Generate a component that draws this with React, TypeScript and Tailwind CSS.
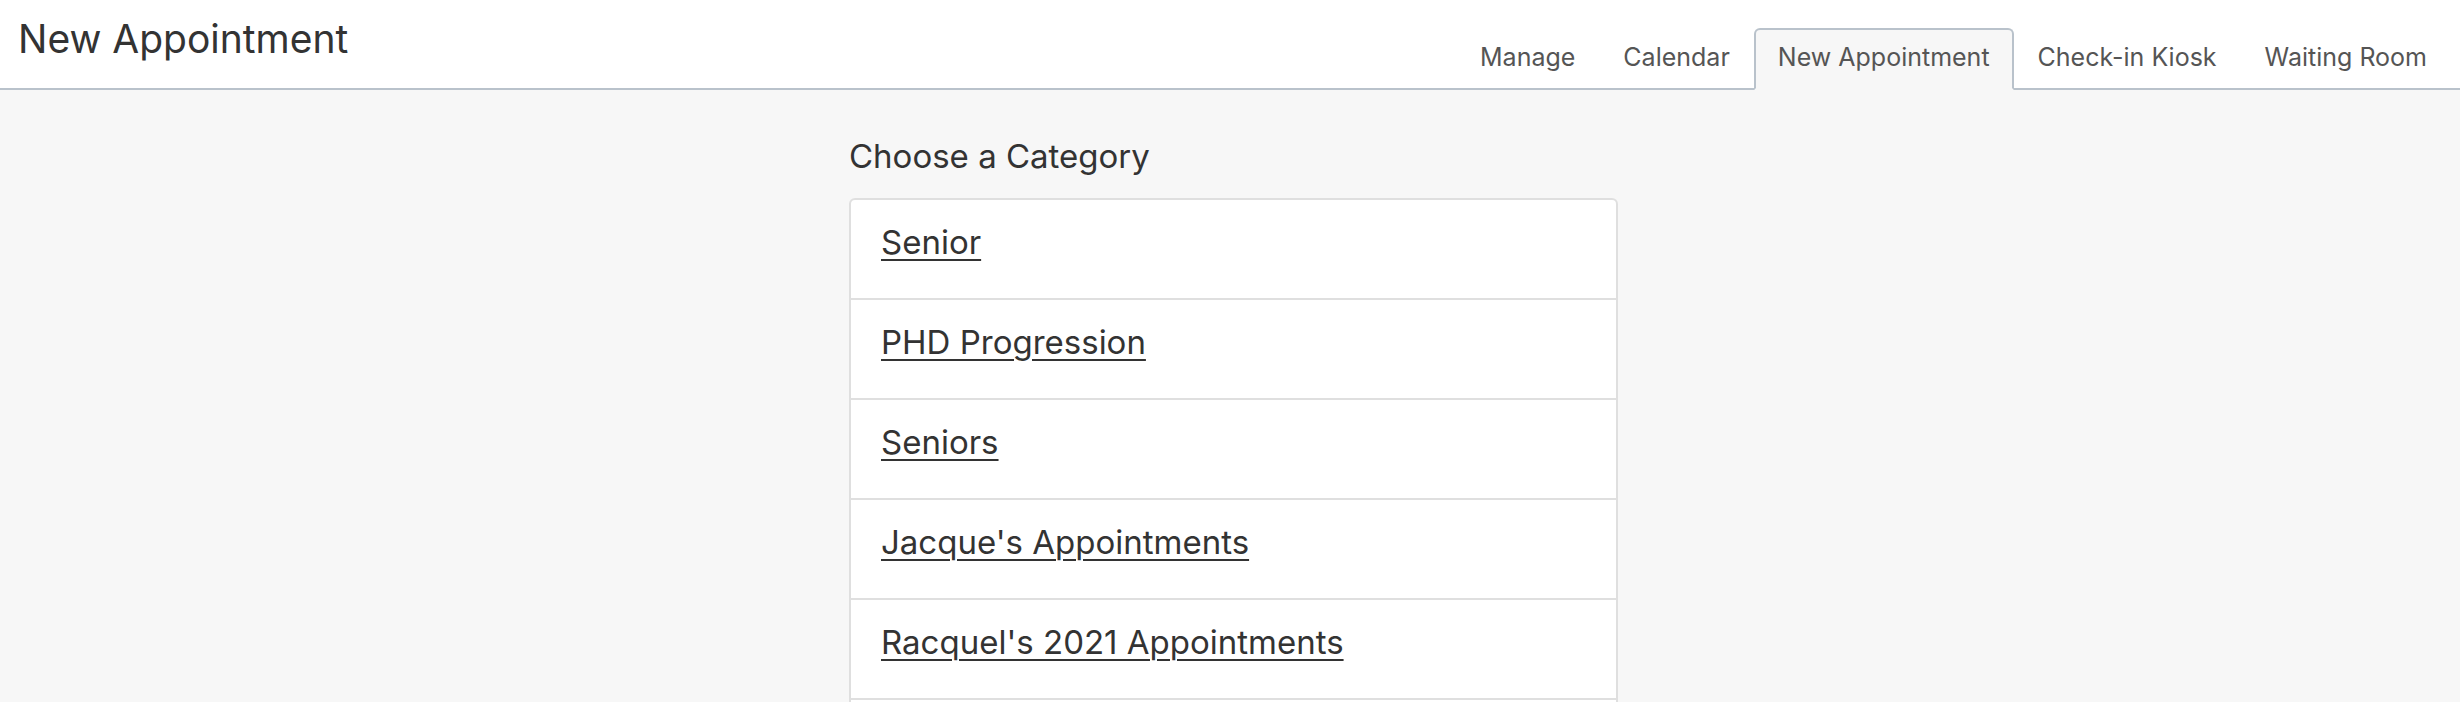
const tabs = ["Manage", "Calendar", "New Appointment", "Check-in Kiosk", "Waiting Room"];
const categories = ["Senior", "PHD Progression", "Seniors", "Jacque's Appointments", "Racquel's 2021 Appointments"];

export default function App() {
  const active = "New Appointment";
  return (
    <div className="h-[702px] overflow-hidden bg-[#f7f7f7] font-['Inter',sans-serif] text-[#333]">
      <header className="flex items-start justify-between border-b-2 border-[#b9c2cb] bg-white pl-[18px] pr-[9px]">
        <h1 className="pt-[17px] text-[39px] leading-[44px] font-normal">New Appointment</h1>
        <nav className="-mb-[2px] mt-[28px] flex">
          {tabs.map(t => (
            <a
              key={t}
              href="#"
              className={
                t === active
                  ? "flex h-[62px] items-center rounded-t-[6px] border-2 border-[#b9c2cb] border-b-[#f7f7f7] bg-[#f7f7f7] px-[22px] pb-[2px] text-[25px] text-[#555]"
                  : "flex h-[62px] items-center border-2 border-transparent px-[22px] pb-[2px] text-[25px] text-[#555]"
              }
            >
              {t}
            </a>
          ))}
        </nav>
      </header>

      <main className="ml-[849px] w-[769px] pt-[48px]">
        <h2 className="text-[33px] leading-[36px] font-normal">Choose a Category</h2>
        <ul className="mt-[24px] rounded-[6px] border-2 border-[#dfdfdf] bg-white">
          {categories.map((c, i) => (
            <li key={c} className={i === 0 ? "flex h-[98px] items-center px-[30px] pb-[15px]" : "flex h-[100px] items-center border-t-2 border-[#dfdfdf] px-[30px] pb-[15px]"}>
              <a href="#" className="text-[33px] leading-[40px] underline decoration-2 underline-offset-[5px]">
                {c}
              </a>
            </li>
          ))}
          <li className="h-[100px] border-t-2 border-[#dfdfdf]" />
        </ul>
      </main>
    </div>
  );
}
